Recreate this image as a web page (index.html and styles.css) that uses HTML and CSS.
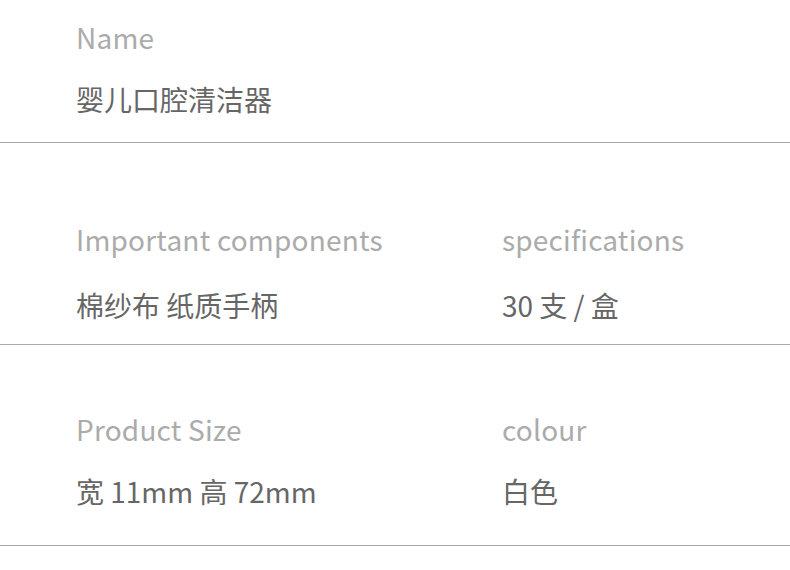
FILE: index.html
```html
<!DOCTYPE html>
<html lang="zh-CN">
<head>
<meta charset="utf-8">
<title>婴儿口腔清洁器</title>
<link rel="stylesheet" href="styles.css">
</head>
<body>
<main class="sheet">
  <section class="row row-name">
    <div class="field">
      <div class="label">Name</div>
      <div class="value">婴儿口腔清洁器</div>
    </div>
  </section>
  <section class="row row-components">
    <div class="field">
      <div class="label">Important components</div>
      <div class="value">棉纱布 纸质手柄</div>
    </div>
    <div class="field">
      <div class="label">specifications</div>
      <div class="value">30 支 / 盒</div>
    </div>
  </section>
  <section class="row row-size">
    <div class="field">
      <div class="label">Product Size</div>
      <div class="value">宽 11mm 高 72mm</div>
    </div>
    <div class="field">
      <div class="label">colour</div>
      <div class="value">白色</div>
    </div>
  </section>
</main>
</body>
</html>
```

FILE: styles.css
```css
html, body {
  margin: 0;
  padding: 0;
  background: #ffffff;
}
body {
  width: 790px;
  height: 570px;
  overflow: hidden;
  font-family: "Noto Sans CJK SC", "Noto Sans", sans-serif;
}
.sheet {
  display: flex;
  flex-direction: column;
}
.row {
  display: grid;
  grid-template-columns: 426px 1fr;
  padding-left: 76px;
  border-bottom: 1px solid #a8a8a8;
}
.field {
  display: flex;
  flex-direction: column;
}
.label {
  font-size: 28px;
  line-height: 40px;
  height: 40px;
  color: #ababab;
  letter-spacing: 0.2px;
  white-space: nowrap;
}
.value {
  font-size: 28px;
  line-height: 40px;
  height: 40px;
  color: #666666;
  white-space: nowrap;
}
.row-name {
  padding-top: 17px;
  padding-bottom: 23px;
}
.row-name .value { margin-top: 22px; }
.row-components {
  padding-top: 76px;
  padding-bottom: 19px;
}
.row-components .value { margin-top: 26px; }
.row-size {
  padding-top: 64px;
  padding-bottom: 34px;
}
.row-size .value { margin-top: 22px; }
```
